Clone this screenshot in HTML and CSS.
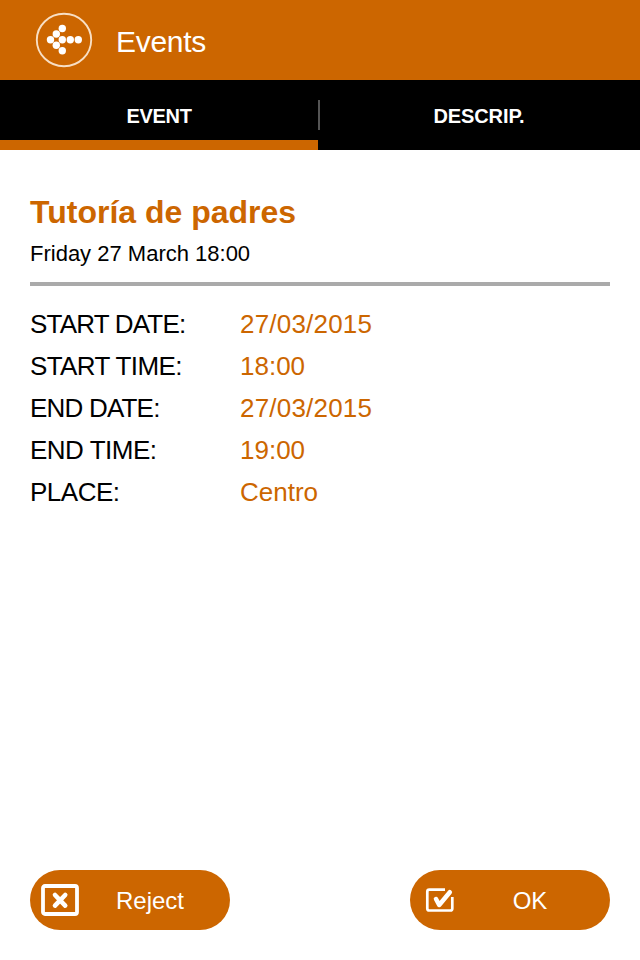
FILE: index.html
```
<!DOCTYPE html>
<html lang="en">
<head>
    <meta charset="UTF-8">
    <meta name="viewport" content="width=device-width, initial-scale=1.0">
    <title>Events</title>
    <link rel="stylesheet" href="styles.css">
</head>
<body>
    <header class="header">
        <svg class="back" width="58" height="56" viewBox="0 0 58 56">
            <ellipse cx="29" cy="28" rx="27.2" ry="26.2" fill="none" stroke="#f8dfc4" stroke-width="1.9"/>
            <g fill="#fff">
                <circle cx="27.3" cy="16.5" r="3.7"/>
                <circle cx="21.3" cy="22" r="3.7"/>
                <circle cx="15.5" cy="27.7" r="3.7"/>
                <circle cx="27.3" cy="27.7" r="3.7"/>
                <circle cx="35.3" cy="27.7" r="3.7"/>
                <circle cx="43.3" cy="27.7" r="3.7"/>
                <circle cx="21.3" cy="33.2" r="3.7"/>
                <circle cx="27.3" cy="38.7" r="3.7"/>
            </g>
        </svg>
        <h1 class="header-title">Events</h1>
    </header>
    <nav class="tabs">
        <div class="tab active"><span class="tab-event">EVENT</span></div>
        <div class="divider"></div>
        <div class="tab"><span class="tab-descrip">DESCRIP.</span></div>
    </nav>
    <main class="content">
        <h2 class="title">Tutoría de padres</h2>
        <p class="date">Friday 27 March 18:00</p>
        <dl class="details">
            <dt class="start-date">START DATE:</dt>
            <dd class="full-date">27/03/2015</dd>
            <dt class="start-time">START TIME:</dt>
            <dd>18:00</dd>
            <dt class="end-date">END DATE:</dt>
            <dd class="full-date">27/03/2015</dd>
            <dt class="end-time">END TIME:</dt>
            <dd>19:00</dd>
            <dt class="place">PLACE:</dt>
            <dd>Centro</dd>
        </dl>
    </main>
    <footer class="actions">
        <button class="button">
            <svg class="button-icon" width="40" height="34" viewBox="0 0 40 34">
                <rect x="3" y="3" width="34" height="28" rx="2" fill="none" stroke="#fff" stroke-width="3.8"/>
                <path d="M15 12l10.2 10.6M25.2 12L15 22.6" fill="none" stroke="#fff" stroke-width="4.6" stroke-linecap="round"/>
            </svg>
            <span class="button-text">Reject</span>
        </button>
        <button class="button">
            <svg class="button-icon" width="40" height="34" viewBox="0 0 40 34">
                <path d="M25 6.6H9.3Q7.3 6.6 7.3 8.6V25.5Q7.3 27.5 9.3 27.5H30.3Q32.3 27.5 32.3 25.5V14" fill="none" stroke="#fff" stroke-width="2.7"/>
                <path d="M16 16L19.2 22L29.8 9.2" fill="none" stroke="#fff" stroke-width="4.5" stroke-linecap="round" stroke-linejoin="round"/>
            </svg>
            <span class="button-text">OK</span>
        </button>
    </footer>
</body>
</html>
```
FILE: styles.css
```
* {
    box-sizing: border-box;
}

body {
    display: flex;
    flex-direction: column;
    height: 960px;
    margin: 0;
    background-color: #fff;
    color: #000;
    font-family: "Liberation Sans", Arial, sans-serif;
}

.header {
    display: flex;
    align-items: center;
    height: 80px;
    padding-left: 35px;
    background: #cc6600;
    color: #fff;
}

.header-title {
    margin: 4px 0 0 23px;
    font-size: 30px;
    font-weight: normal;
    line-height: 36px;
    letter-spacing: -0.3px;
}

.tabs {
    display: flex;
    height: 70px;
    background: #000;
    color: #fff;
}

.tab {
    width: 318px;
    border-bottom: 10px solid #000;
    font-size: 20px;
    font-weight: bold;
    line-height: 72px;
    text-align: center;
}

.tab.active {
    border-bottom-color: #cc6600;
}

.tab-event {
    letter-spacing: -0.3px;
}

.tab-descrip {
    letter-spacing: -0.1px;
}

.divider {
    width: 2px;
    height: 30px;
    margin-top: 20px;
    background: #555;
}

.content {
    flex: 1;
    padding: 42px 30px 0;
}

.title {
    margin: 0;
    color: #cc6600;
    font-size: 32px;
    line-height: 40px;
}

.date {
    margin: 0;
    padding: 8px 0 15px;
    border-bottom: 4px solid #aaa;
    font-size: 22px;
    line-height: 27px;
}

.details {
    display: grid;
    grid-template-columns: 210px 1fr;
    margin: 17px 0 0;
    font-size: 26px;
    line-height: 42px;
}

.details dd {
    margin: 0;
    color: #cc6600;
}

.start-date,
.end-date {
    letter-spacing: -0.8px;
}

.start-time {
    letter-spacing: -0.6px;
}

.end-time,
.place {
    letter-spacing: -0.5px;
}

.full-date {
    letter-spacing: 0.2px;
}

.actions {
    display: flex;
    justify-content: space-between;
    padding: 0 30px 30px;
}

.button {
    display: flex;
    align-items: center;
    width: 200px;
    height: 60px;
    padding: 0 10px;
    border: none;
    border-radius: 30px;
    background: #cc6600;
    color: #fff;
    font-family: inherit;
    font-size: 24px;
}

.button-text {
    flex: 1;
    padding-top: 2px;
    text-align: center;
}
```
